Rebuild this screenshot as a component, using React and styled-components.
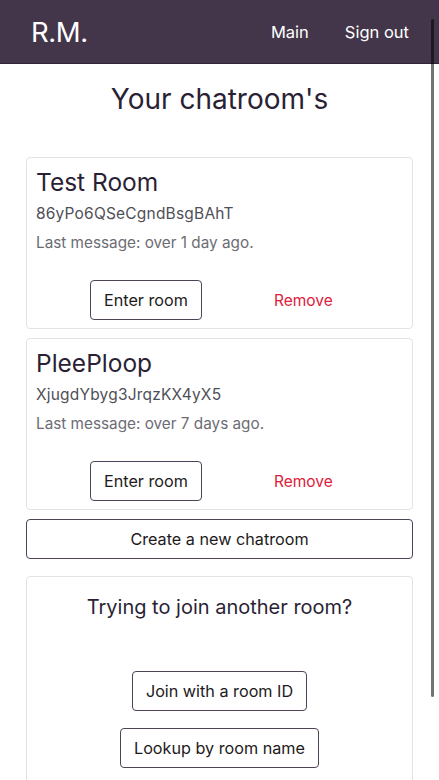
import styled, { createGlobalStyle } from "styled-components";

const GlobalStyle = createGlobalStyle`
  html, body {
    margin: 0;
    padding: 0;
    background: #fff;
    font-family: Inter, "Noto Sans", sans-serif;
    color: #2b2030;
  }
  html::-webkit-scrollbar {
    display: none;
  }
  html {
    scrollbar-width: none;
  }
  * {
    box-sizing: border-box;
  }
`;

const Nav = styled.nav`
  height: 64px;
  background: #43354a;
  border-bottom: 1px solid #2e2433;
  display: flex;
  align-items: center;
  justify-content: space-between;
  padding: 0 30px 0 31px;
`;

const Brand = styled.div`
  color: #fff;
  font-size: 27.5px;
  font-weight: 400;
  letter-spacing: -0.4px;
`;

const NavLinks = styled.div`
  display: flex;
  gap: 36px;
`;

const NavLink = styled.a`
  color: #fff;
  font-size: 16.5px;
  text-decoration: none;
`;

const Main = styled.main`
  padding: 0 26px;
`;

const Title = styled.h1`
  margin: 18px 0 41px;
  text-align: center;
  font-size: 28px;
  font-weight: 400;
  color: #2b1f35;
`;

const Card = styled.div`
  border: 1px solid #e3e3e3;
  border-radius: 4px;
  padding: ${(p) => p.$pad || "10px 9px 8px"};
  margin-bottom: ${(p) => p.$mb || "9px"};
  text-align: ${(p) => (p.$center ? "center" : "left")};
`;

const RoomName = styled.h2`
  margin: 0 0 6px;
  font-size: 24.5px;
  font-weight: 400;
  line-height: 29px;
  color: #2b1f35;
`;

const RoomId = styled.div`
  font-size: 15.5px;
  letter-spacing: 0.2px;
  color: #4f4f57;
  line-height: 22px;
  margin-bottom: 7px;
`;

const LastMsg = styled.div`
  font-size: 15.3px;
  color: #6c6c74;
  line-height: 22px;
`;

const Actions = styled.div`
  display: flex;
  align-items: center;
  gap: 72px;
  padding-left: 54px;
  margin-top: 26px;
`;

const OutlineButton = styled.button`
  font-family: inherit;
  font-size: 16.2px;
  color: #1d1a20;
  background: #fff;
  border: 1px solid #4e4357;
  border-radius: 4px;
  height: 40px;
  padding: 0 ${(p) => (p.$block ? "0" : "13px")};
  width: ${(p) => (p.$block ? "100%" : "auto")};
  display: ${(p) => (p.$block ? "block" : "inline-block")};
  margin: ${(p) => p.$m || "0"};
`;

const RemoveLink = styled.span`
  color: #e0203a;
  font-size: 15.5px;
`;

const JoinTitle = styled.h3`
  margin: 8px 0 52px;
  font-size: 20px;
  font-weight: 400;
  color: #2b1f35;
`;

const ButtonStack = styled.div`
  display: flex;
  flex-direction: column;
  align-items: center;
  gap: 17px;
`;

const ScrollThumb = styled.div`
  position: fixed;
  top: 19px;
  right: 5px;
  width: 3px;
  height: 678px;
  border-radius: 2px;
  background: rgba(0, 0, 0, 0.55);
`;

const rooms = [
  { name: "Test Room", id: "86yPo6QSeCgndBsgBAhT", last: "over 1 day ago." },
  { name: "PleePloop", id: "XjugdYbyg3JrqzKX4yX5", last: "over 7 days ago." },
];

const App = () => {
  return (
    <>
      <GlobalStyle />
      <Nav>
        <Brand>R.M.</Brand>
        <NavLinks>
          <NavLink href="#">Main</NavLink>
          <NavLink href="#">Sign out</NavLink>
        </NavLinks>
      </Nav>
      <Main>
        <Title>Your chatroom's</Title>
        {rooms.map((room) => (
          <Card key={room.id}>
            <RoomName>{room.name}</RoomName>
            <RoomId>{room.id}</RoomId>
            <LastMsg>Last message: {room.last}</LastMsg>
            <Actions>
              <OutlineButton>Enter room</OutlineButton>
              <RemoveLink>Remove</RemoveLink>
            </Actions>
          </Card>
        ))}
        <OutlineButton $block $m="0 0 17px">
          Create a new chatroom
        </OutlineButton>
        <Card $center $pad="10px 10px 24px" $mb="20px">
          <JoinTitle>Trying to join another room?</JoinTitle>
          <ButtonStack>
            <OutlineButton>Join with a room ID</OutlineButton>
            <OutlineButton>Lookup by room name</OutlineButton>
          </ButtonStack>
        </Card>
      </Main>
      <ScrollThumb />
    </>
  );
};

export default App;
